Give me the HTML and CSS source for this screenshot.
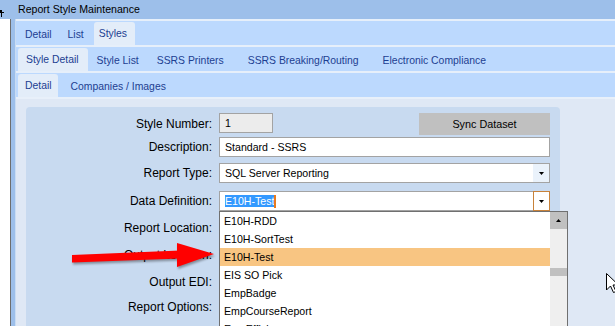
FILE: index.html
```html
<!DOCTYPE html>
<html>

<head>
  <title>Report Style Maintenance</title>
  <link rel="stylesheet" href="styles.css">
</head>

<body>
  <div class="screen">
    <div class="side">
      <div class="side-top">
        <svg class="pin" width="4" height="7" viewBox="0 0 4 7"><path d="M0 0h2v2h2v1h-2v4h-1v-4h-1z" fill="#000"/></svg>
      </div>
      <div class="side-body">
        <div class="side-white"></div>
        <div class="side-line"></div>
        <div class="side-blue"></div>
      </div>
    </div>

    <div class="window">
      <div class="titlebar">Report Style Maintenance</div>

      <div class="tabrow r1">
        <div class="tab">Detail</div>
        <div class="tab">List</div>
        <div class="tab on">Styles</div>
      </div>
      <div class="tabrow r2">
        <div class="tab on">Style Detail</div>
        <div class="tab">Style List</div>
        <div class="tab">SSRS Printers</div>
        <div class="tab gap">SSRS Breaking/Routing</div>
        <div class="tab gap">Electronic Compliance</div>
      </div>
      <div class="tabrow r3">
        <div class="tab on">Detail</div>
        <div class="tab">Companies / Images</div>
      </div>

      <div class="content">
        <div class="panel">
          <div class="frow row1">
            <label class="lbl">Style Number:</label>
            <div class="box small">1</div>
            <div class="btn">Sync Dataset</div>
          </div>
          <div class="frow row2">
            <label class="lbl">Description:</label>
            <div class="box">Standard - SSRS</div>
          </div>
          <div class="frow row3">
            <label class="lbl">Report Type:</label>
            <div class="combo">
              <div class="combo-text">SQL Server Reporting</div>
              <div class="combo-btn"><svg width="5" height="3" viewBox="0 0 5 3"><path d="M0 0h5l-2.5 3z" fill="#000"/></svg></div>
            </div>
          </div>
          <div class="frow row4">
            <label class="lbl">Data Definition:</label>
            <div class="combo">
              <div class="combo-text"><span class="sel">E10H-Test</span><span class="caret"></span></div>
              <div class="combo-btn focus"><svg width="5" height="3" viewBox="0 0 5 3"><path d="M0 0h5l-2.5 3z" fill="#000"/></svg></div>
            </div>
          </div>
          <div class="frow row5"><label class="lbl">Report Location:</label></div>
          <div class="frow row6"><label class="lbl">Output Location:</label></div>
          <div class="frow row7"><label class="lbl">Output EDI:</label></div>
          <div class="frow row8"><label class="lbl">Report Options:</label></div>
        </div>
      </div>
    </div>

    <div class="list">
      <div class="items">
        <div class="item">E10H-RDD</div>
        <div class="item">E10H-SortTest</div>
        <div class="item hl">E10H-Test</div>
        <div class="item">EIS SO Pick</div>
        <div class="item">EmpBadge</div>
        <div class="item">EmpCourseReport</div>
        <div class="item">EmpEfficiency</div>
      </div>
      <div class="sb">
        <div class="sb-up"><svg width="5" height="3" viewBox="0 0 5 3"><path d="M0 3h5l-2.5-3z" fill="#000"/></svg></div>
        <div class="sb-thumb"></div>
      </div>
    </div>

    <svg class="arrow" width="615" height="326" viewBox="0 0 615 326">
      <polygon points="72,255 180,250.5 180,258.5 72,262.5" fill="#ff0000"/>
      <polygon points="177,243 214,254 177,267" fill="#ff0000"/>
    </svg>

    <svg class="cursor" width="13" height="21" viewBox="0 0 13 21">
      <path d="M0.5 0.5 L0.5 17 L4.5 13 L7.5 19.5 L10 18.5 L7 12 L12.5 12 Z" fill="#fff" stroke="#000" stroke-width="1"/>
    </svg>
  </div>
</body>

</html>
```

FILE: styles.css
```css
body {
  margin: 0;
  font-family: "Liberation Sans", Arial, sans-serif;
}

.screen {
  position: relative;
  width: 615px;
  height: 326px;
  overflow: hidden;
  display: flex;
  background: #dfe8f5;
}

/* left edge of the host app */
.side {
  width: 16px;
  flex-shrink: 0;
  display: flex;
  flex-direction: column;
}

.side-top {
  height: 19px;
  background: #9dbfea;
}

.pin {
  display: block;
  margin-top: 10px;
}

.side-body {
  flex: 1;
  display: flex;
}

.side-white {
  width: 10px;
  background: #fff;
}

.side-line {
  width: 1px;
  background: #6d6d6d;
}

.side-blue {
  width: 4px;
  background: #9dbfea;
  border-right: 1px solid #c9dcf3;
}

.window {
  flex: 1;
  display: flex;
  flex-direction: column;
}

.titlebar {
  height: 19px;
  line-height: 19px;
  padding-left: 2px;
  background: #9dbfea;
  font-size: 10.6px;
  color: #000;
}

/* tab strips */
.tabrow {
  height: 24px;
  border-top: 2px solid #e6effa;
  background: #bcd9fe;
  display: flex;
  align-items: flex-end;
}

.tab {
  height: 23px;
  line-height: 26px;
  font-size: 10.4px;
  color: #1c3e91;
  white-space: nowrap;
}

.tab.on {
  line-height: 23px;
  background: #e3edf9;
  border-radius: 3px 3px 0 0;
}

.r1 {
  padding-left: 1px;
}

.r1 .tab {
  padding: 0 8px;
}

.r1 .tab.on {
  margin-left: 2px;
  padding: 0 8px 0 5px;
}

.r2 {
  padding-left: 2px;
}

.r2 .tab {
  padding: 0 9px;
}

.r2 .tab.on {
  padding-left: 8px;
}

.r2 .tab.gap {
  margin-left: 6px;
}

.r3 {
  padding-left: 2px;
}

.r3 .tab {
  padding: 0 13px;
}

.r3 .tab.on {
  padding: 0 6px 0 7px;
}

/* form area */
.content {
  flex: 1;
  display: flex;
  border-top: 2px solid #e8f0fa;
  padding: 8px 0 0 10px;
}

.panel {
  width: 524px;
  padding: 6px 10px 0 0;
  background: #c8daf0;
  border-radius: 4px 4px 0 0;
}

.frow {
  display: flex;
  align-items: flex-start;
  height: 20px;
}

.lbl {
  width: 186px;
  margin-right: 7px;
  flex-shrink: 0;
  text-align: right;
  font-size: 12px;
  line-height: 20px;
  color: #000;
}

.row1 {
  height: 22px;
}

.row1 .lbl {
  line-height: 22px;
}

.row2 { margin-top: 2px; }
.row3 { margin-top: 6px; }
.row4 { margin-top: 8px; }
.row5 { margin-top: 7px; }
.row6 { margin-top: 7px; }
.row7 { margin-top: 7px; }
.row8 { margin-top: 5px; }

.box {
  box-sizing: border-box;
  width: 331px;
  height: 20px;
  padding-left: 5px;
  border: 1px solid #a3a3a3;
  background: #fff;
  font-size: 10.6px;
  line-height: 18px;
  color: #000;
}

.box.small {
  width: 54px;
  background: #ececec;
}

.btn {
  margin-left: auto;
  width: 131px;
  height: 22px;
  line-height: 22px;
  background: #c0c0c0;
  text-align: center;
  font-size: 10.8px;
  color: #000;
}

.combo {
  box-sizing: border-box;
  width: 331px;
  height: 20px;
  display: flex;
  border: 1px solid #a3a3a3;
  background: #fff;
}

.combo-text {
  flex: 1;
  display: flex;
  align-items: center;
  padding-left: 5px;
  font-size: 10.6px;
  color: #000;
}

.combo-btn {
  width: 16px;
  display: flex;
  align-items: center;
  justify-content: center;
  background: #eaf2fb;
}

.combo-btn.focus {
  margin: -1px -1px -1px 0;
  width: 15px;
  border: 1px solid #c8823a;
  background: #fff;
}

.sel {
  background: #3399ff;
  color: #fff;
  line-height: 12px;
}

.caret {
  width: 2px;
  height: 13px;
  background: #e87b1e;
}

/* open dropdown */
.list {
  position: absolute;
  left: 219px;
  top: 211px;
  width: 347px;
  height: 130px;
  display: flex;
  border: 1px solid #707070;
  background: #fff;
}

.items {
  flex: 1;
}

.item {
  height: 18px;
  line-height: 18px;
  padding-left: 4px;
  font-size: 10.6px;
  color: #000;
}

.item.hl {
  background: #f8c582;
}

.sb {
  width: 17px;
  display: flex;
  flex-direction: column;
  background: #efefef;
}

.sb-up {
  height: 17px;
  display: flex;
  align-items: center;
  justify-content: center;
  background: #c0c0c0;
}

.sb-thumb {
  margin-top: 39px;
  height: 8px;
  background: #c0c0c0;
}

.arrow {
  position: absolute;
  left: 0;
  top: 0;
  filter: drop-shadow(1px 2px 1px rgba(0, 0, 0, 0.35));
}

.cursor {
  position: absolute;
  left: 606px;
  top: 273px;
}
```
